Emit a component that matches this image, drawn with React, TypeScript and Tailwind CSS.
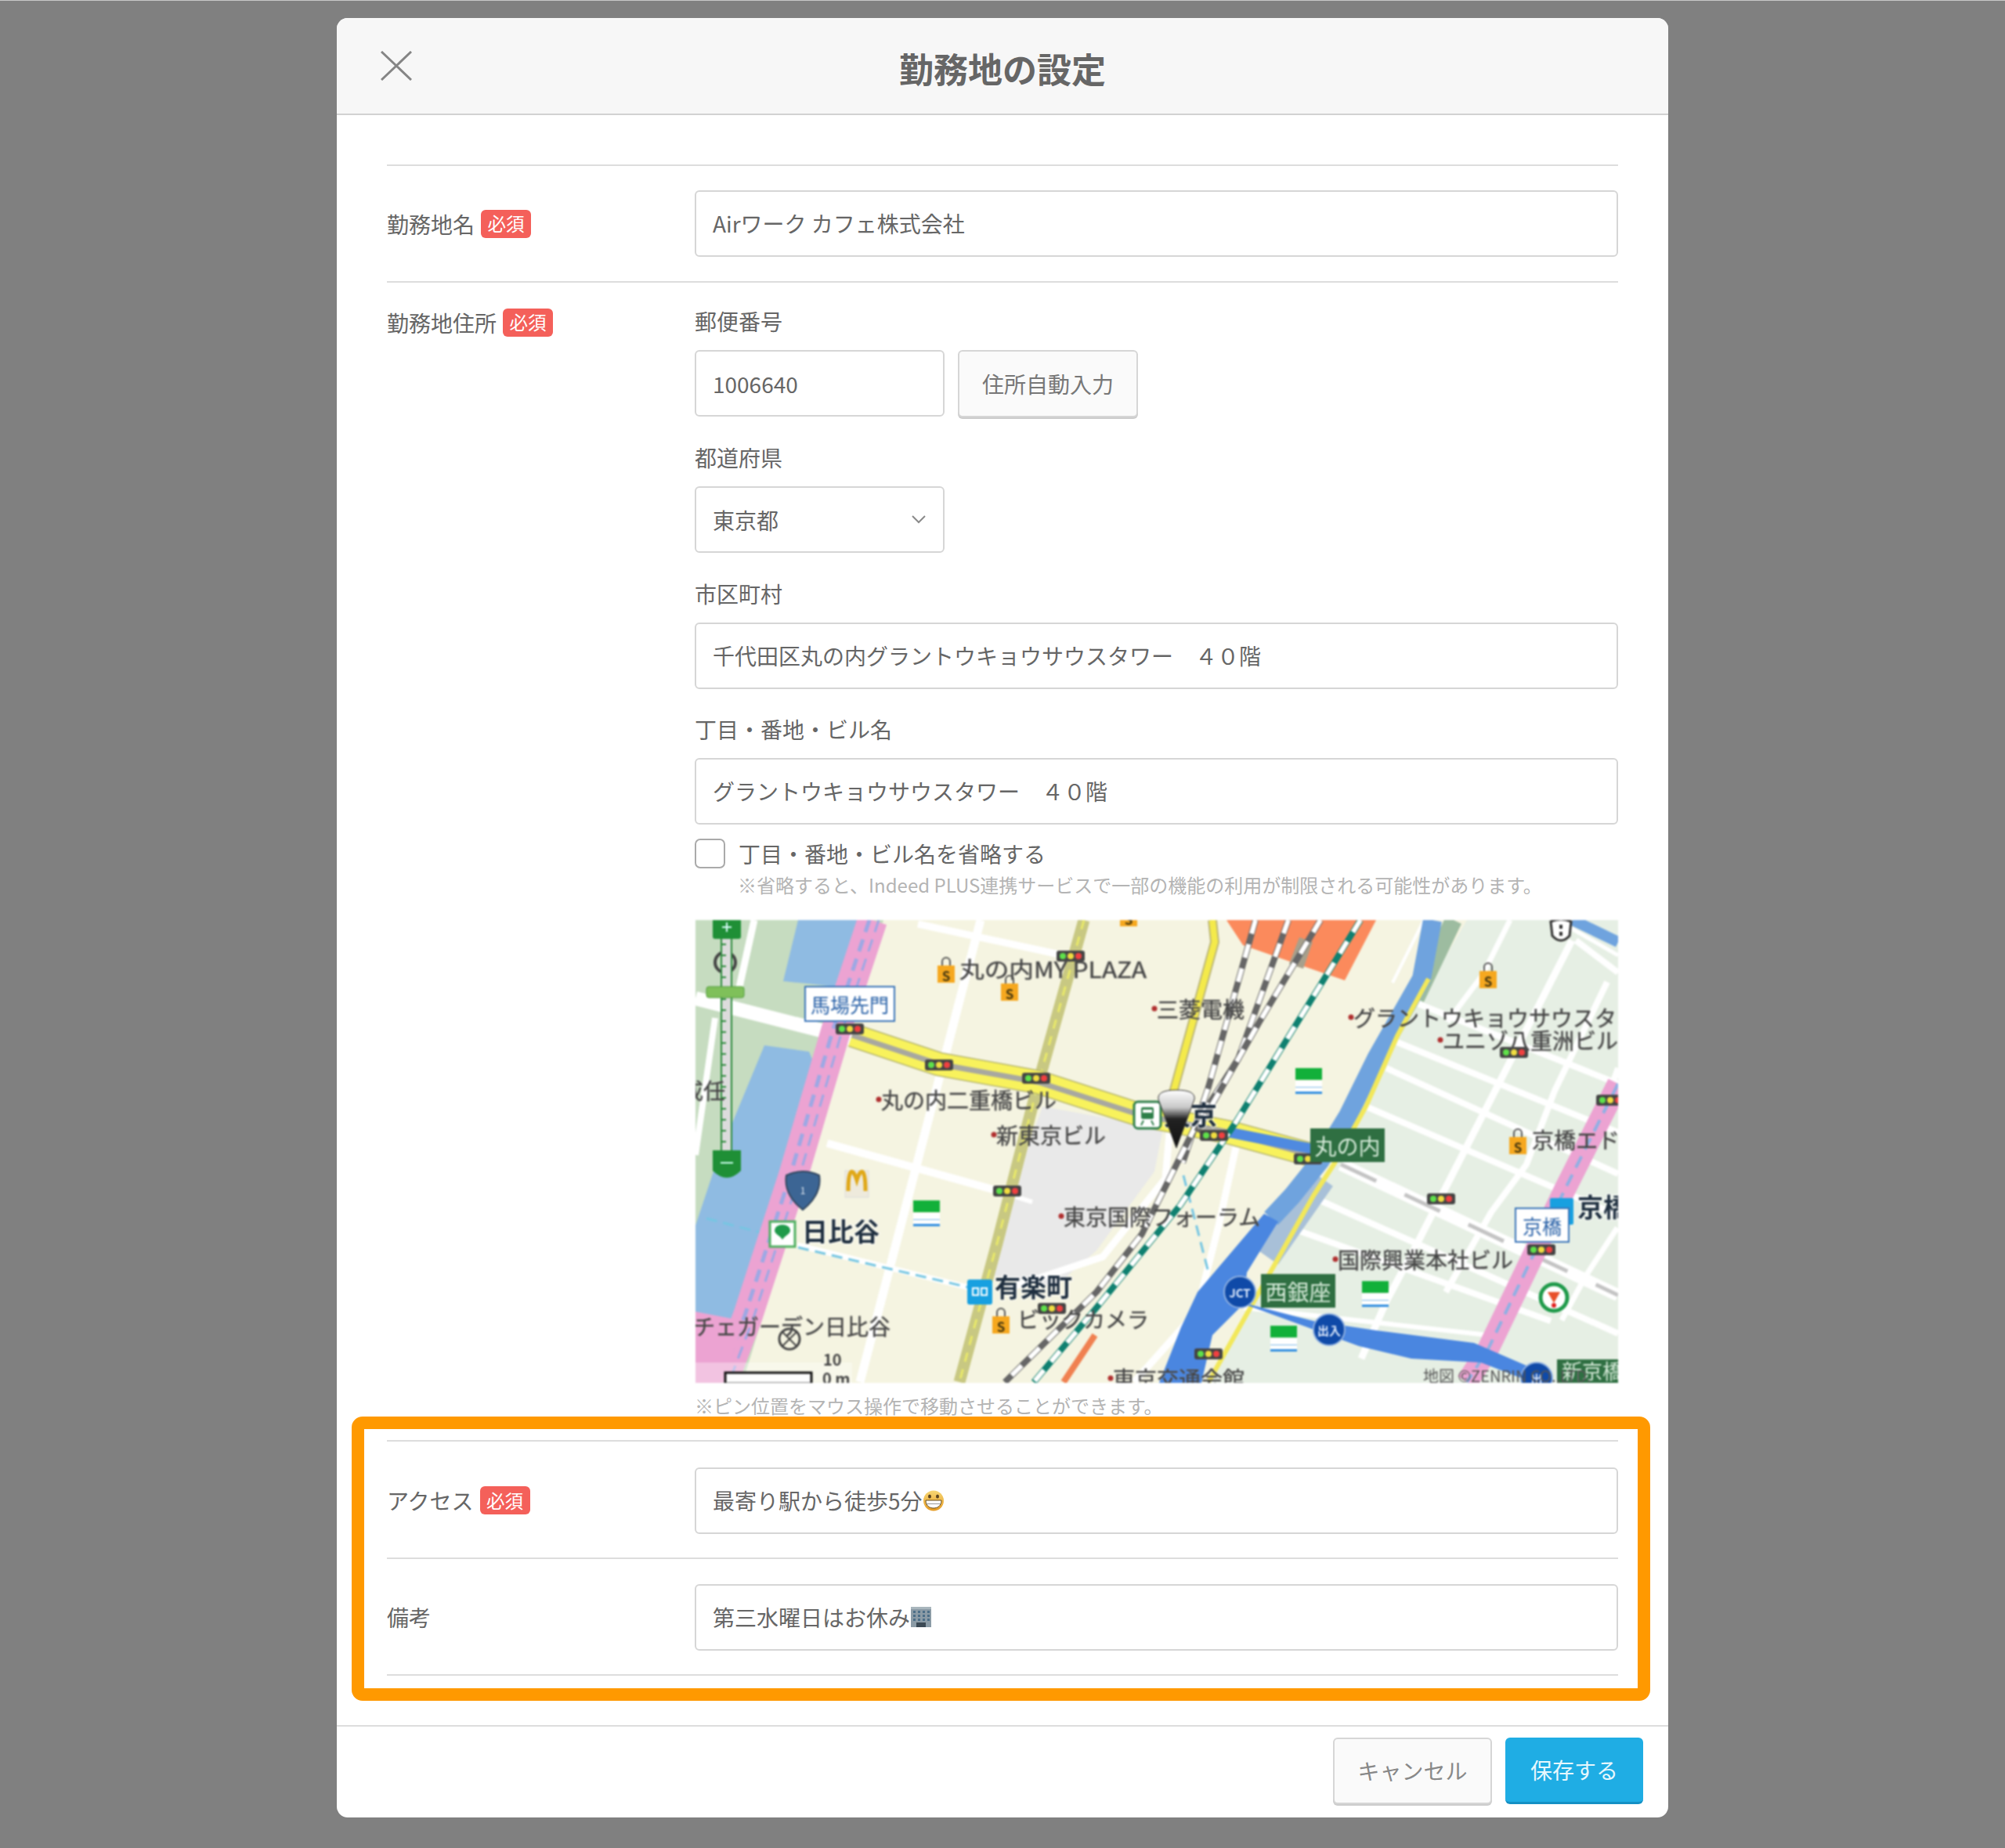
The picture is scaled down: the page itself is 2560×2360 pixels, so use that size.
import type { ReactNode } from 'react'

const font = 'font-["Noto_Sans_CJK_JP","Noto_Sans",sans-serif]'
const boxClass = 'flex h-[85px] items-center rounded-[6px] border-2 border-[#d6d6d6] bg-white px-[21px] text-[28px] text-[#666]'
const labelClass = 'h-[36px] text-[28px] leading-[36px] text-[#666]'

function Badge() {
  return (
    <span className="ml-[8px] flex h-[36px] w-[64px] items-center justify-center rounded-[6px] bg-[#f4605a] text-[23.5px] leading-none text-white">
      必須
    </span>
  )
}

function RowLabel({ text, required }: { text: string; required?: boolean }) {
  return (
    <div className="flex h-[40px] items-center">
      <span className="text-[28px] leading-[40px] text-[#666]">{text}</span>
      {required && <Badge />}
    </div>
  )
}

function Row({ label, required, children, className }: { label: string; required?: boolean; children: ReactNode; className: string }) {
  return (
    <div className={`flex items-center border-t-2 border-[#ddd] ${className}`}>
      <div className="w-[393px] shrink-0">
        <RowLabel text={label} required={required} />
      </div>
      <div className="min-w-0 flex-1">{children}</div>
    </div>
  )
}

function GrinEmoji() {
  return (
    <svg width="28" height="27" viewBox="0 0 28 27" className="shrink-0">
      <defs>
        <linearGradient id="face" x1="0" y1="0" x2="0" y2="1">
          <stop offset="0" stopColor="#f7d774" />
          <stop offset="1" stopColor="#e59a22" />
        </linearGradient>
      </defs>
      <ellipse cx="14" cy="13.5" rx="13" ry="13" fill="url(#face)" />
      <ellipse cx="9" cy="8" rx="2" ry="2.6" fill="#5c4520" />
      <ellipse cx="19" cy="8" rx="2" ry="2.6" fill="#5c4520" />
      <path d="M4 13h20c0 7-5 10-10 10S4 20 4 13z" fill="#fff" stroke="#6b5020" strokeWidth="1" />
      <path d="M4.5 17.5h19" stroke="#999" strokeWidth="1" />
    </svg>
  )
}

function BuildingEmoji() {
  return (
    <svg width="28" height="26" viewBox="0 0 28 26" className="shrink-0">
      <rect x="1" y="0" width="26" height="26" fill="#8b9ba6" />
      <rect x="1" y="0" width="26" height="3" fill="#a9b6bd" />
      {[5, 10, 15].map((y) =>
        [4, 10, 16, 22].map((x) => <rect key={`${x}-${y}`} x={x} y={y} width="3" height="3" fill="#4d6f88" />),
      )}
      <rect x="8" y="20" width="12" height="6" fill="#3c4a55" />
    </svg>
  )
}

type Pt = string

function Line({ p, c, w, dash, cap }: { p: Pt; c: string; w: number; dash?: string; cap?: 'round' | 'butt' }) {
  return (
    <polyline
      points={p}
      fill="none"
      stroke={c}
      strokeWidth={w}
      strokeDasharray={dash}
      strokeLinejoin="round"
      strokeLinecap={cap ?? 'butt'}
    />
  )
}

function Rail({ p, c = '#666' }: { p: Pt; c?: string }) {
  return (
    <>
      <Line p={p} c={c} w={8} />
      <Line p={p} c="#fff" w={6} dash="18 14" />
    </>
  )
}

const whiteRoads: [Pt, number][] = [
  ['0,100 200,151', 18],
  ['364,0 210,590', 11],
  ['168,285 380,344', 10],
  ['284,5 470,45', 9],
  ['75,0 55,90', 9],
  ['25,125 0,300', 8],
  ['380,344 430,360', 6],
  ['130,415 360,472', 7],
  ['560,590 640,500 668,390 690,290', 9],
  ['400,470 520,430 600,330 606,262', 9],
  ['923,107 1178,209', 8],
  ['896,156 1178,271', 8],
  ['882,189 1178,324', 8],
  ['856,238 1178,377', 8],
  ['793,356 1178,528', 8],
  ['771,397 1092,512', 8],
  ['1124,26 1178,67', 8],
  ['1119,26 923,410 882,487 850,560', 9],
  ['1164,79 1097,218 1061,312 1016,373 958,475', 8],
  ['1178,189 1137,303 1092,393 1040,500', 8],
  ['1177,393 1137,454 1106,511', 7],
  ['1040,0 1005,70 960,130', 7],
  ['700,495 1012,530', 6],
  ['1100,0 1178,45', 5],
  ['930,0 890,80', 4],
]

const lights: [number, number][] = [
  [197, 139], [311, 185], [435, 202], [479, 46], [398, 346], [455, 496], [662, 275], [782, 305],
  [655, 554], [952, 356], [1080, 421], [1045, 169], [1168, 230],
]

const bags: [number, number][] = [[320, 64], [401, 87], [390, 512], [1012, 71], [1050, 283], [553, -8]]
const marts: [number, number][] = [[295, 376], [783, 207], [868, 479], [751, 536]]

const labels: { t: string; x: number; y: number; s?: number; b?: boolean; dot?: boolean; len?: number }[] = [
  { t: '丸の内MY PLAZA', x: 337, y: 62, len: 239 },
  { t: '三菱電機', x: 589, y: 113, dot: true },
  { t: '丸の内二重橋ビル', x: 237, y: 229, dot: true },
  { t: '新東京ビル', x: 384, y: 274, dot: true },
  { t: '東京国際フォーラム', x: 470, y: 378, dot: true },
  { t: '日比谷', x: 136, y: 396, s: 33, b: true },
  { t: '有楽町', x: 382, y: 467, s: 33, b: true },
  { t: 'ビックカメラ', x: 411, y: 509 },
  { t: 'チェガーデン日比谷', x: -3, y: 518 },
  { t: '戒任', x: -18, y: 217, s: 28 },
  { t: '東京', x: 598, y: 247, s: 34, b: true },
  { t: '東京交通会館', x: 533, y: 585, dot: true },
  { t: 'グラントウキョウサウスタ', x: 840, y: 124, dot: true },
  { t: 'ユニゾ八重洲ビル', x: 954, y: 153, dot: true },
  { t: '京橋エド', x: 1068, y: 280 },
  { t: '京橋', x: 1126, y: 365, s: 33, b: true },
  { t: '国際興業本社ビル', x: 820, y: 433, dot: true },
]

function MapLabel({ t, x, y, s = 28, b, dot, len }: (typeof labels)[number]) {
  return (
    <>
      {dot && <circle cx={x - 3} cy={y} r={3.5} fill="#b03030" />}
      <text
        x={x}
        y={y}
        fontSize={s}
        fontWeight={b ? 700 : 400}
        dominantBaseline="central"
        fill={b ? '#1f2f40' : '#444'}
        stroke={b ? '#fff' : '#777'}
        strokeOpacity={b ? 0.55 : 0.5}
        strokeWidth={b ? 3 : 1}
        paintOrder="stroke"
        textLength={len}
        lengthAdjust={len ? 'spacingAndGlyphs' : undefined}
      >
        {t}
      </text>
    </>
  )
}

function SignBox({ t, x, y, w, h, green }: { t: string; x: number; y: number; w: number; h: number; green?: boolean }) {
  return (
    <>
      <rect x={x} y={y} width={w} height={h} fill={green ? '#2f6f42' : '#fff'} stroke={green ? '#2f6f42' : '#3a74b8'} strokeWidth={green ? 0 : 2} />
      <text
        x={x + w / 2}
        y={y + h / 2}
        textAnchor="middle"
        dominantBaseline="central"
        fontSize={green ? 28 : 25}
        fill={green ? '#d5ead8' : '#2a62a8'}
      >
        {t}
      </text>
    </>
  )
}

function Circle({ t, x, y, r = 20, s = 15 }: { t: string; x: number; y: number; r?: number; s?: number }) {
  return (
    <>
      <circle cx={x} cy={y} r={r} fill="#0f4aa8" stroke="#8fb0e0" strokeWidth={2} />
      <text x={x} y={y} textAnchor="middle" dominantBaseline="central" fontSize={s} fontWeight={700} fill="#dbe8fb">
        {t}
      </text>
    </>
  )
}

function MapDrawing() {
  return (
    <svg
      viewBox="0 0 1178 591"
      className="block h-[591px] w-[1178px] font-['Noto_Sans_CJK_JP','Noto_Sans',sans-serif] blur-[0.8px]"
    >
      <defs>
        <linearGradient id="pin" x1="0" y1="0" x2="0" y2="1">
          <stop offset="0" stopColor="#fff" />
          <stop offset="0.3" stopColor="#c8c8c8" />
          <stop offset="0.5" stopColor="#222" />
          <stop offset="1" stopColor="#111" />
        </linearGradient>
      </defs>
      <rect width="1178" height="591" fill="#f5f4e1" />
      <polygon points="0,0 240,0 60,591 0,591" fill="#c6dcc0" />
      <polygon points="985,0 1178,0 1178,591 650,591 704,503 811,312 891,161" fill="#e6efe4" />
      <polygon points="443,238 597,266 586,321 512,422 459,468 380,454 422,298" fill="#e9e9e9" />
      <polygon points="131,0 210,0 180,85 112,78" fill="#8fbbe2" />
      <polygon points="88,160 145,168 152,185 115,330 60,518 0,518 0,390 30,300" fill="#8fbbe2" />
      <polygon points="678,0 869,0 829,77 762,54 699,32" fill="#fb8a5c" />
      <polygon points="771,22 788,28 776,62 758,56" fill="#a7a08c" />

      {whiteRoads.map(([p, w], i) => (
        <Line key={i} p={p} c="#fff" w={w} />
      ))}

      <Line p="824,312 1178,479" c="#fff" w={16} />
      <Line p="824,312 1178,479" c="#c4c4c4" w={5} dash="50 40" />

      <Line p="14,381 83,399" c="#76c6e2" w={3} dash="14 8" />
      <Line p="131,418 353,470" c="#76c6e2" w={3} dash="14 8" />
      <Line p="623,326 655,450" c="#76c6e2" w={3} dash="14 8" />

      <Line p="496,0 438,207 385,413 337,590" c="#c8c882" w={15} />
      <Line p="496,0 438,207 385,413 337,590" c="#e9e96a" w={3} dash="12 10" />

      <Line p="660,0 663,28 610,220" c="#bdb87a" w={12} />
      <Line p="660,0 663,28 610,220" c="#f4ea4a" w={8} />

      <Line p="200,147 311,184 438,207 565,248 681,271 787,300" c="#b8b870" w={31} />
      <Line p="200,147 311,184 438,207 565,248 681,271 787,300" c="#f8f25c" w={28} />
      <Line p="200,147 311,184 438,207 565,248 681,271 787,300" c="#a8a8a0" w={7} />
      <Line p="681,271 787,292" c="#4f8ae0" w={13} />

      <Line p="226,0 179,142 125,326 67,505 35,590" c="#eca3d2" w={38} />
      <Line p="222,0 175,142 121,326 63,505 31,590" c="#9da8e4" w={5} dash="16 10" />
      <Line p="234,0 187,142 133,326 75,505 43,590" c="#9da8e4" w={3} dash="16 10" />
      <polygon points="0,500 62,512 35,591 0,591" fill="#eca3d2" />

      <Line p="1178,209 1110,344 1012,548 985,590" c="#eca3d2" w={28} />
      <Line p="1178,209 1110,344 1012,548 985,590" c="#8fb0e4" w={4} dash="16 10" />

      <Line p="968,0 920,100" c="#9dbca0" w={22} />
      <Line p="800,330 730,430" c="#a8c0d8" w={34} />
      <Line p="941,0 927,75 869,177 833,250 798,307 762,352 735,381" c="#6fa3de" w={24} />
      <Line p="936,75 896,148 856,238 815,312 789,352 704,503 655,590" c="#f2e85a" w={6} />
      <polygon points="726,375 744,385 704,450 700,490 660,530 646,591 592,591 620,520 641,475" fill="#4a86e0" />
      <polygon points="677,483 789,512 869,524 994,540 1061,569 1092,591 1070,591 1003,565 914,560 847,544 713,495" fill="#4a86e0" />
      <Line p="1120,0 1178,28" c="#6fa3de" w={14} />

      <Rail p="715,0 655,213 622,310" />
      <Rail p="757,0 693,177 641,258 570,401 512,475 395,590" />
      <Rail p="798,0 720,130 680,200 640,270" />
      <Rail p="849,0 690,258 619,364 512,495 432,590" c="#0f8070" />
      <Line p="470,590 510,530" c="#f08050" w={8} />

      {/* zoom control */}
      <circle cx="38" cy="54" r="13" fill="none" stroke="#444" strokeWidth="4" />
      <rect x="33" y="20" width="13" height="280" fill="#dcdcdc" stroke="#2a8a3a" strokeWidth="2" />
      <Line p="36,30 36,290" c="#2a8a3a" w={6} dash="2 12" />
      <rect x="22" y="-6" width="36" height="30" rx="3" fill="#1f8f36" />
      <path d="M34 9h12M40 3v12" stroke="#dff" strokeWidth="2" />
      <rect x="14" y="85" width="48" height="14" rx="3" fill="#7fc05a" stroke="#4f9a3a" strokeWidth="1" />
      <path d="M22 294h36v26q-18 18-36 0z" fill="#1f8f36" />
      <path d="M32 310h16" stroke="#cfe" strokeWidth="2" />

      {lights.map(([x, y]) => (
        <g key={`${x}-${y}`}>
          <rect x={x - 18} y={y - 7} width={36} height={14} rx={3} fill="#444" />
          <circle cx={x - 10} cy={y} r={4} fill="#5fe04a" />
          <circle cx={x} cy={y} r={4} fill="#f0dc40" />
          <circle cx={x + 10} cy={y} r={4} fill="#f04040" />
        </g>
      ))}

      {bags.map(([x, y]) => (
        <g key={`${x}-${y}`}>
          <path d={`M${x - 5} ${y - 6}v-5a5 5 0 0 1 10 0v5`} fill="none" stroke="#555" strokeWidth="2" />
          <rect x={x - 11} y={y - 6} width={22} height={22} fill="#f6a81f" />
          <text x={x} y={y + 6} textAnchor="middle" dominantBaseline="central" fontSize="17" fontWeight={700} fill="#4a3a10">
            S
          </text>
        </g>
      ))}

      {marts.map(([x, y]) => (
        <g key={`${x}-${y}`}>
          <rect x={x - 17} y={y - 18} width={34} height={15} fill="#12b03a" />
          <rect x={x - 17} y={y - 2} width={34} height={14} fill="#fff" />
          <rect x={x - 17} y={y + 12} width={34} height={3} fill="#2f8de0" />
          <rect x={x - 17} y={y + 6} width={34} height={1} fill="#7cb8e8" />
        </g>
      ))}

      <rect x="191" y="320" width="30" height="34" fill="#eeeadc" stroke="#ddd" />
      <path d="M195 346c0-30 6-30 11-14 5-16 11-16 11 14" fill="none" stroke="#e0a818" strokeWidth="5" />

      <path d="M116 326q21-10 42 0q4 24-21 44q-25-20-21-44z" fill="#3c6594" stroke="#33475e" strokeWidth="2" />
      <text x="137" y="344" textAnchor="middle" dominantBaseline="central" fontSize="12" fill="#dfe8f2">
        1
      </text>

      <rect x="95" y="385" width="32" height="32" fill="#fff" stroke="#4fb060" strokeWidth="3" />
      <path d="M101 396a10 7 0 0 1 20 0c0 5-6 6-10 12-4-6-10-7-10-12z" fill="#1f9a4a" />

      <rect x="560" y="232" width="34" height="34" rx="5" fill="#fff" stroke="#2f7f4a" strokeWidth="3" />
      <rect x="569" y="239" width="16" height="15" rx="2" fill="#2f7f4a" />
      <rect x="571" y="242" width="12" height="4" fill="#fff" />
      <path d="M569 262l3-6M585 262l-3-6" stroke="#2f7f4a" strokeWidth="2" />

      <rect x="347" y="459" width="32" height="32" rx="3" fill="#18a0e0" />
      <rect x="1091" y="355" width="30" height="34" rx="2" fill="#18a0e0" />
      <path d="M354 470h7v9h-7zM365 470h7v9h-7z" fill="none" stroke="#fff" strokeWidth="2" />

      <circle cx="120" cy="535" r="13" fill="none" stroke="#444" strokeWidth="3" />
      <path d="M111 526l18 18M129 526l-18 18" stroke="#444" strokeWidth="2" />

      <circle cx="1096" cy="482" r="17" fill="#fff" stroke="#1f9a4a" strokeWidth="5" />
      <path d="M1088 475h16l-8 14z" fill="#e8502a" />
      <circle cx="1096" cy="492" r="3" fill="#e02020" />

      <path d="M1092 2q13-6 26 0l-2 18q-11 12-22 0z" fill="#fff" stroke="#333" strokeWidth="3" />
      <rect x="1103" y="6" width="4" height="5" fill="#333" />
      <rect x="1103" y="15" width="4" height="5" fill="#333" />

      <SignBox t="馬場先門" x={140} y={85} w={114} h={44} />
      <SignBox t="京橋" x={1047} y={368} w={68} h={43} />
      <SignBox t="丸の内" x={785} y={266} w={95} h={43} green />
      <SignBox t="西銀座" x={722} y={452} w={95} h={43} green />
      <rect x="1100" y="561" width="78" height="30" fill="#2f6f42" />
      <text x="1106" y="586" fontSize="26" fill="#d5ead8">
        新京橋
      </text>

      <Circle t="JCT" x={695} y={475} />
      <Circle t="出入" x={809} y={523} />
      <Circle t="出" x={1074} y={585} />

      {labels.map((l) => (
        <MapLabel key={l.t} {...l} />
      ))}

      <text x="929" y="590" fontSize="20" fill="#555">
        地図 ©ZENRIN CO.,LTD.
      </text>

      <path d="M614 291l-23-62q-2-12 23-12t23 12z" fill="url(#pin)" stroke="#333" strokeWidth="1" />

      <rect x="0" y="565" width="200" height="26" fill="#fff" opacity="0.35" />
      <rect x="38" y="578" width="110" height="14" fill="#fff" stroke="#111" strokeWidth="3" />
      <text x="163" y="560" fontSize="20" fontWeight={700} dominantBaseline="central" fill="#444">
        10
      </text>
      <text x="162" y="584" fontSize="20" fontWeight={700} dominantBaseline="central" fill="#444">
        0 m
      </text>
    </svg>
  )
}

export default function App() {
  return (
    <div className={`min-h-[2360px] border-t border-[#c8c8c8] bg-[#808080] pt-[22px] ${font}`}>
      <div className="relative mx-auto w-[1700px] rounded-[14px] bg-white">
        <header className="grid h-[124px] grid-cols-[1fr_auto_1fr] items-center rounded-t-[14px] border-b-2 border-[#d2d2d2] bg-[#f7f7f7] pl-[56px]">
          <svg width="40" height="38" viewBox="0 0 40 38" fill="none" stroke="#858585" strokeWidth="3">
            <path d="M1 1l38 36M39 1L1 37" />
          </svg>
          <h1 className="-ml-[56px] pt-[5px] text-[44px] leading-[60px] font-bold text-[#666]">勤務地の設定</h1>
          <div />
        </header>

        <div className="px-[64px] pt-[63px] pb-[63px]">
          <Row label="勤務地名" required className="pt-[31px] pb-[31px]">
            <div className={boxClass}>
              <span className="-translate-y-px">Airワーク カフェ株式会社</span>
            </div>
          </Row>

          <div className="flex border-t-2 border-[#ddd] pt-[31px] pb-[24px]">
            <div className="w-[393px] shrink-0">
              <RowLabel text="勤務地住所" required />
            </div>
            <div className="min-w-0 flex-1">
              <div className="flex flex-col gap-[33.3px]">
                <div>
                  <div className={labelClass}>郵便番号</div>
                  <div className="mt-[19px] flex gap-[17px]">
                    <div className={`${boxClass} w-[319px]`}>1006640</div>
                    <button className="h-[86px] w-[230px] rounded-[6px] border-2 border-[#d6d6d6] bg-[#fafafa] text-[28px] text-[#777] shadow-[0_2px_0_#ccc]">
                      住所自動入力
                    </button>
                  </div>
                </div>
                <div>
                  <div className={labelClass}>都道府県</div>
                  <div className={`${boxClass} mt-[19px] w-[319px] justify-between pr-[22px]`}>
                    <span>東京都</span>
                    <svg width="18" height="11" viewBox="0 0 18 11" fill="none" stroke="#8a8a8a" strokeWidth="2">
                      <path d="M1 1l8 8 8-8" />
                    </svg>
                  </div>
                </div>
                <div>
                  <div className={labelClass}>市区町村</div>
                  <div className={`${boxClass} mt-[19px]`}>千代田区丸の内グラントウキョウサウスタワー　４０階</div>
                </div>
                <div>
                  <div className={labelClass}>丁目・番地・ビル名</div>
                  <div className={`${boxClass} mt-[19px]`}>グラントウキョウサウスタワー　４０階</div>
                </div>
              </div>

              <label className="mt-[18px] flex h-[38px] items-center">
                <span className="h-[38px] w-[39px] rounded-[7px] border-2 border-[#aaa] bg-white" />
                <span className="ml-[17px] text-[28px] text-[#666]">丁目・番地・ビル名を省略する</span>
              </label>
              <p className="mt-[1px] pl-[55px] text-[24px] leading-[40px] text-[#b4b4b4]">
                ※省略すると、Indeed PLUS連携サービスで一部の機能の利用が制限される可能性があります。
              </p>

              <div className="mt-[25px] pl-px">
                <MapDrawing />
              </div>
              <p className="mt-[9px] text-[24px] leading-[40px] text-[#b4b4b4]">※ピン位置をマウス操作で移動させることができます。</p>
            </div>
          </div>

          <Row label="アクセス" required className="pt-[33px] pb-[30px]">
            <div className={boxClass}>
              <span>最寄り駅から徒歩5分</span>
              <GrinEmoji />
            </div>
          </Row>
          <Row label="備考" className="pt-[32px] pb-[30px]">
            <div className={boxClass}>
              <span>第三水曜日はお休み</span>
              <BuildingEmoji />
            </div>
          </Row>
          <div className="border-t-2 border-[#ddd]" />
        </div>

        <footer className="flex justify-end gap-[17px] border-t-2 border-[#ddd] pt-[14px] pr-[32px] pb-[17px]">
          <button className="h-[85px] w-[203px] rounded-[6px] border-2 border-[#d6d6d6] bg-[#fafafa] text-[28px] text-[#888] shadow-[0_2px_0_#ccc]">
            キャンセル
          </button>
          <button className="h-[85px] w-[176px] rounded-[6px] border-b-[3px] border-[#1590c4] bg-[#1fade4] text-[28px] text-[#e6f7fd]">
            保存する
          </button>
        </footer>

        {/* annotation frame over the two last rows */}
        <div className="pointer-events-none absolute top-[1786px] left-[19px] h-[363px] w-[1658px] rounded-[14px] border-[16px] border-[#ff9900]" />
      </div>
    </div>
  )
}
